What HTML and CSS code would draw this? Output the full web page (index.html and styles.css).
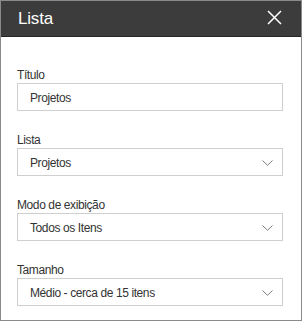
FILE: index.html
```html
<!DOCTYPE html>
<html lang="pt">
  <head>
    <meta charset="UTF-8" />
    <meta name="viewport" content="width=device-width, initial-scale=1.0" />
    <title>Lista</title>
    <link rel="stylesheet" href="styles.css">
  </head>
  <body>
    <div class="panel">
      <div class="panel-header">
        <span class="panel-title">Lista</span>
        <button class="close-btn" aria-label="Fechar">
          <svg width="15" height="15" viewBox="0 0 15 15">
            <path d="M1 1 L14 14 M14 1 L1 14" stroke="#fff" stroke-width="1.5" fill="none" />
          </svg>
        </button>
      </div>
      <div class="panel-body">
        <div class="field">
          <label class="field-label">Título</label>
          <div class="field-input">Projetos</div>
        </div>
        <div class="field">
          <label class="field-label">Lista</label>
          <div class="field-input select">
            <span>Projetos</span>
            <svg class="chevron" width="11" height="6" viewBox="0 0 11 6">
              <path d="M0.5 0.5 L5.5 5.3 L10.5 0.5" stroke="#7a7a7a" stroke-width="1" fill="none" />
            </svg>
          </div>
        </div>
        <div class="field">
          <label class="field-label">Modo de exibição</label>
          <div class="field-input select">
            <span>Todos os Itens</span>
            <svg class="chevron" width="11" height="6" viewBox="0 0 11 6">
              <path d="M0.5 0.5 L5.5 5.3 L10.5 0.5" stroke="#7a7a7a" stroke-width="1" fill="none" />
            </svg>
          </div>
        </div>
        <div class="field">
          <label class="field-label">Tamanho</label>
          <div class="field-input select">
            <span>Médio - cerca de 15 itens</span>
            <svg class="chevron" width="11" height="6" viewBox="0 0 11 6">
              <path d="M0.5 0.5 L5.5 5.3 L10.5 0.5" stroke="#7a7a7a" stroke-width="1" fill="none" />
            </svg>
          </div>
        </div>
      </div>
    </div>
  </body>
</html>
```

FILE: styles.css
```css
body
{
  margin: 0;
  font-family: "Liberation Sans", Arial, sans-serif;
}
.panel
{
  width: 302px;
  height: 321px;
  box-sizing: border-box;
  border: 1px solid #8a8a8a;
  background-color: #fff;
}
.panel-header
{
  height: 35px;
  background-color: #3c3c3c;
  border-bottom: 1px solid #262626;
  display: flex;
  align-items: center;
  justify-content: space-between;
  padding: 0 19px 0 17px;
}
.panel-title
{
  color: #fff;
  font-size: 17px;
  letter-spacing: -0.2px;
}
.close-btn
{
  background: none;
  border: none;
  padding: 0;
  margin-top: -3px;
  width: 15px;
  height: 15px;
  display: flex;
}
.panel-body
{
  padding: 9px 18px 0 16px;
}
.field
{
  margin-top: 21px;
}
.field-label
{
  display: block;
  font-size: 12px;
  line-height: 16px;
  letter-spacing: -0.4px;
  color: #333;
}
.field-input
{
  height: 28px;
  box-sizing: border-box;
  border: 1px solid #cfcfcf;
  padding: 1px 12px 0;
  font-size: 12px;
  letter-spacing: -0.4px;
  color: #333;
  display: flex;
  align-items: center;
}
.select
{
  justify-content: space-between;
  padding-right: 9px;
}
.chevron
{
  display: block;
}
```
